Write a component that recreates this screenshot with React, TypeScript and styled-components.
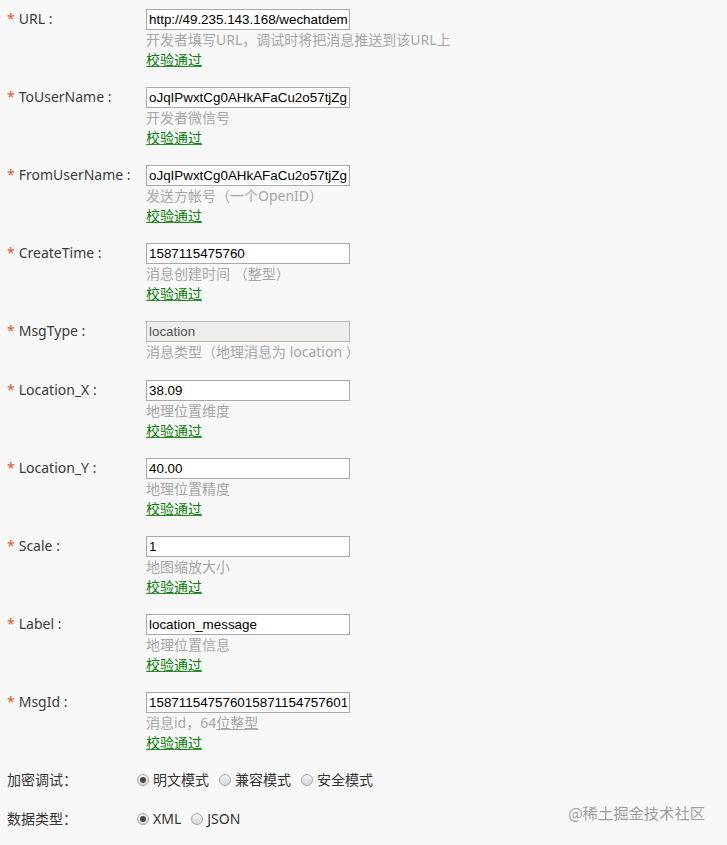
import React from 'react';
import styled, { createGlobalStyle } from 'styled-components';

const GlobalStyle = createGlobalStyle`
    html, body {
        margin: 0;
        padding: 0;
        background: #f8f8f8;
    }
    body {
        font-family: "Noto Sans", "Noto Sans CJK SC", sans-serif;
        font-size: 14px;
        color: #333;
    }
`

const Page = styled.div`
    position: relative;
    width: 727px;
    height: 845px;
    padding: 9px 0 0 7px;
    box-sizing: border-box;
    overflow: hidden;
`

const Field = styled.div`
    display: grid;
    grid-template-columns: 139px 1fr;
    margin-bottom: 18px;
`

const Label = styled.div`
    line-height: 20px;
    height: 21px;
    font-size: 14px;
    color: #3a3a3a;
    white-space: nowrap;
`

const Star = styled.span`
    color: #e0561c;
    margin-right: 4px;
`

const Body = styled.div`
    display: flex;
    flex-direction: column;
    align-items: flex-start;
`

const Input = styled.input`
    box-sizing: border-box;
    width: 204px;
    height: 21px;
    margin: 0;
    padding: 0 2px;
    border: 1px solid #a9a9a9;
    background: #fff;
    font-family: "Liberation Sans", Arial, sans-serif;
    font-size: 13.4px;
    color: #000;
    outline: none;

    &:disabled {
        background: #efeeea;
        border-color: #b5b5b5;
        color: #555;
    }
`

const Hint = styled.div`
    line-height: 20px;
    height: 20px;
    font-size: 14px;
    color: #a6a6a6;
    white-space: nowrap;
`

const Under = styled.span`
    text-decoration: underline;
    text-decoration-color: #aaa;
`

const Valid = styled.div`
    line-height: 19px;
    height: 19px;
    font-size: 14px;
    color: #0a7d0a;
    text-decoration: underline;
    text-decoration-color: #3a8f3a;
    text-underline-offset: 1px;
`

const RadioRow = styled.div`
    display: grid;
    grid-template-columns: 130px 1fr;
    height: 20px;
    line-height: 20px;
    margin-bottom: 19px;
    &:first-of-type {
        margin-top: 1px;
    }
`

const RadioLabel = styled.div`
    font-size: 14px;
    color: #333;
`

const Options = styled.div`
    display: flex;
    align-items: center;
    gap: 10px;
`

const Option = styled.label`
    display: flex;
    align-items: center;
    gap: 4px;
    font-size: 14px;
    color: #333;
`

const Dot = styled.span<{ $checked?: boolean }>`
    display: inline-block;
    position: relative;
    box-sizing: border-box;
    width: 12px;
    height: 12px;
    border-radius: 50%;
    border: 1px solid #a8a8a8;
    background: linear-gradient(#f4f4f4, #d6d6d6);

    &::after {
        content: '';
        display: ${p => (p.$checked ? 'block' : 'none')};
        position: absolute;
        left: 2px;
        top: 2px;
        width: 6px;
        height: 6px;
        border-radius: 50%;
        background: #4a4a4a;
    }
`

const Watermark = styled.div`
    position: absolute;
    right: 22px;
    bottom: 22px;
    font-family: "Noto Sans CJK SC", sans-serif;
    font-size: 15.3px;
    color: #9c9c9c;
    text-shadow: 0 1px 1px rgba(255, 255, 255, 0.8);
`

type FieldDef = {
    label: string;
    value: string;
    hint: React.ReactNode;
    disabled?: boolean;
    valid?: boolean;
};

const fields: FieldDef[] = [
    { label: 'URL', value: 'http://49.235.143.168/wechatdemo/wx', hint: '开发者填写URL，调试时将把消息推送到该URL上', valid: true },
    { label: 'ToUserName', value: 'oJqIPwxtCg0AHkAFaCu2o57tjZgI', hint: '开发者微信号', valid: true },
    { label: 'FromUserName', value: 'oJqIPwxtCg0AHkAFaCu2o57tjZgI', hint: '发送方帐号（一个OpenID）', valid: true },
    { label: 'CreateTime', value: '1587115475760', hint: '消息创建时间 （整型）', valid: true },
    { label: 'MsgType', value: 'location', hint: '消息类型（地理消息为 location ）', disabled: true },
    { label: 'Location_X', value: '38.09', hint: '地理位置维度', valid: true },
    { label: 'Location_Y', value: '40.00', hint: '地理位置精度', valid: true },
    { label: 'Scale', value: '1', hint: '地图缩放大小', valid: true },
    { label: 'Label', value: 'location_message', hint: '地理位置信息', valid: true },
    { label: 'MsgId', value: '15871154757601587115475760158', hint: <>消息id，64<Under>位整型</Under></>, valid: true },
];

function App() {
    return (
        <Page>
            <GlobalStyle />
            {fields.map(f => (
                <Field key={f.label}>
                    <Label><Star>*</Star>{f.label} :</Label>
                    <Body>
                        <Input defaultValue={f.value} disabled={f.disabled} readOnly />
                        <Hint>{f.hint}</Hint>
                        {f.valid && <Valid>校验通过</Valid>}
                    </Body>
                </Field>
            ))}

            <RadioRow>
                <RadioLabel>加密调试：</RadioLabel>
                <Options>
                    <Option><Dot $checked />明文模式</Option>
                    <Option><Dot />兼容模式</Option>
                    <Option><Dot />安全模式</Option>
                </Options>
            </RadioRow>
            <RadioRow>
                <RadioLabel>数据类型：</RadioLabel>
                <Options>
                    <Option><Dot $checked />XML</Option>
                    <Option><Dot />JSON</Option>
                </Options>
            </RadioRow>

            <Watermark>@稀土掘金技术社区</Watermark>
        </Page>
    );
}

export default App;
